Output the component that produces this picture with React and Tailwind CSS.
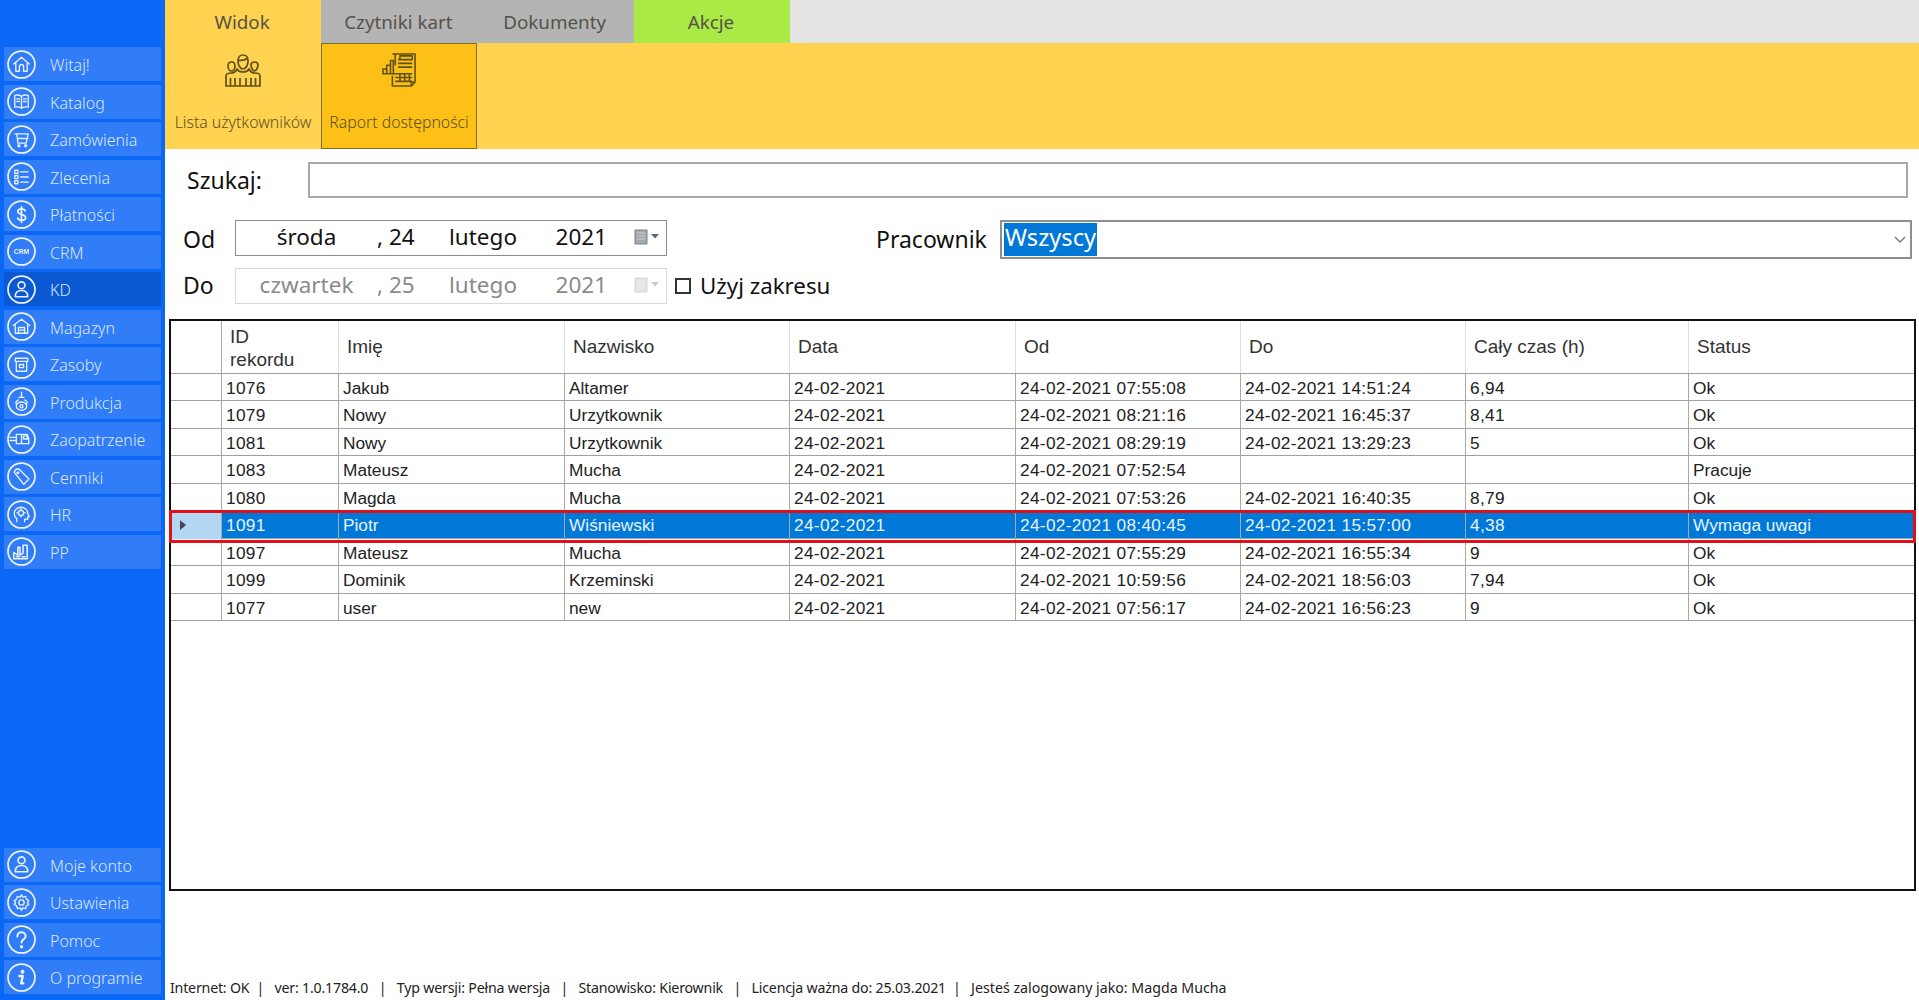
import React from "react";

const C = ({ children }) => (
  <svg viewBox="0 0 28 28" className="w-[29px] h-[29px] shrink-0" fill="none" stroke="#e8f1ff" strokeWidth="1.3" strokeLinejoin="round" strokeLinecap="round">
    <circle cx="14" cy="14" r="13" strokeWidth="1.7" />
    {children}
  </svg>
);

const icons = {
  home: <C><path d="M6.500 13.500 14 7l7.500 6.500M8.500 12v8.500h3.500v-4.500a2 2 0 0 1 4 0v4.500h3.500V12" /></C>,
  book: <C><path d="M14 9c-2-1.300-4.500-1.500-6.500-1v11.500c2-.5 4.500-.3 6.500 1 2-1.300 4.500-1.500 6.500-1V8c-2-.5-4.500-.3-6.500 1zM14 9v11.500M9.500 11.500h2.500M9.500 14h2.500M16 11.500h2.500M16 14h2.500" /></C>,
  cart: <C><path d="M7.500 8.500h2l1 9h8l2-9h-11M11 13h9" /><circle cx="11.500" cy="20" r="1" /><circle cx="18" cy="20" r="1" /></C>,
  list: <C><path d="M7.500 8h3v3h-3zM7.500 13h3v3h-3zM7.500 18h3v3h-3zM13 9.500h7.500M13 14.500h7.500M13 19.500h7.500" /></C>,
  dollar: <C><path d="M17.500 10.500c-.5-1.500-2-2-3.500-2-2 0-3.500 1-3.500 2.700 0 3.800 7.500 1.800 7.500 5.800 0 1.800-1.700 2.700-3.800 2.700-1.800 0-3.400-.7-3.900-2.300M14 6.500v15" strokeWidth="1.700" /></C>,
  crm: <C><text x="14" y="16.500" textAnchor="middle" fontSize="6.500" fontWeight="700" fill="#e8f1ff" stroke="none" fontFamily="Liberation Sans">CRM</text></C>,
  user: <C><circle cx="14" cy="10" r="3.300" strokeWidth="1.600" /><path d="M8 21c0-4.500 2-6 6-6s6 1.500 6 6z" strokeWidth="1.600" /></C>,
  warehouse: <C><path d="M6 13 14 7l8 6M8 12v8.500h12V12M11 20.500v-5.500h6v5.500M11 17.500h6" /></C>,
  box: <C><path d="M8 8h12v3H8zM9 11v9.500h10V11M12 14h4v3h-4z" /></C>,
  prod: <C><path d="M14 5v5M11.500 10h5M9 18.500a5 4 0 1 0 10 0a5 4 0 1 0-10 0M11 12.500c-2 1-3 2.500-2 4M17 12.500c2 1 3 2.500 2 4" /><circle cx="14" cy="18.500" r="1.500" /></C>,
  truck: <C><path d="M9 9h10.500l1.500 4v5H9zM14 9v9M3 12h6M3 15h6M9 18h12M16 10.500h3l1 3h-4z" /></C>,
  tag: <C><path d="M7 10 8.500 7l3-.2 9.700 9.700-5 5zM10.500 9.500a.8.8 0 1 0 .01 0" /></C>,
  head: <C><path d="M9.500 21v-3c-2-1.500-2.500-3.500-2.500-5 0-3.500 3-6 6.500-6s6.500 2.500 6.500 6l1.500 3h-1.500v2.500h-3V21" /><circle cx="13.500" cy="12.500" r="2.500" /><path d="M13.500 8.500v1.500M13.500 15v1.500M9.500 12.500h1.500M16 12.500h1.500" /></C>,
  plant: <C><path d="M6.500 21v-6l4 2.500V10h2v7.500l3-2V8h4v13z M9 19h3M14.500 19h3" strokeWidth="1.500" /></C>,
  gear: <C><circle cx="14" cy="14" r="2.600" /><path d="M14 6.500l1.300 2.300 2.700-.7.700 2.700 2.300 1.300-1.300 1.900 1.300 1.900-2.300 1.300-.7 2.700-2.700-.7L14 21.500l-1.300-2.300-2.700.7-.7-2.700-2.300-1.300 1.300-1.900-1.300-1.900 2.300-1.300.7-2.700 2.700.7z" /></C>,
  q: <C><path d="M10 11c0-2.500 2-4 4-4s4 1.500 4 3.800c0 3.200-4 3-4 6.200" strokeWidth="2" /><circle cx="14" cy="21" r="1" fill="#e8f1ff" /></C>,
  info: <C><path d="M12 12.500h3.200l-1.500 7h2" strokeWidth="2.400" /><circle cx="15" cy="8.500" r="1.300" fill="#e8f1ff" /></C>,
};

const Nav = ({ icon, label, active }) => (
  <div className={`h-[34px] flex items-center pl-[3px] ${active ? "bg-[#0a58d2]" : "bg-[#317cf7]"}`}>
    {icons[icon]}
    <span className="ml-[14px] pt-[2px] text-[16px] font-light text-[#dbe8ff] leading-none">{label}</span>
  </div>
);

const top = [
  ["home", "Witaj!"], ["book", "Katalog"], ["cart", "Zamówienia"], ["list", "Zlecenia"], ["dollar", "Płatności"],
  ["crm", "CRM"], ["user", "KD", true], ["warehouse", "Magazyn"], ["box", "Zasoby"], ["prod", "Produkcja"],
  ["truck", "Zaopatrzenie"], ["tag", "Cenniki"], ["head", "HR"], ["plant", "PP"],
];
const bottom = [["user", "Moje konto"], ["gear", "Ustawienia"], ["q", "Pomoc"], ["info", "O programie"]];

const rows = [
  ["1076", "Jakub", "Altamer", "24-02-2021", "24-02-2021 07:55:08", "24-02-2021 14:51:24", "6,94", "Ok"],
  ["1079", "Nowy", "Urzytkownik", "24-02-2021", "24-02-2021 08:21:16", "24-02-2021 16:45:37", "8,41", "Ok"],
  ["1081", "Nowy", "Urzytkownik", "24-02-2021", "24-02-2021 08:29:19", "24-02-2021 13:29:23", "5", "Ok"],
  ["1083", "Mateusz", "Mucha", "24-02-2021", "24-02-2021 07:52:54", "", "", "Pracuje"],
  ["1080", "Magda", "Mucha", "24-02-2021", "24-02-2021 07:53:26", "24-02-2021 16:40:35", "8,79", "Ok"],
  ["1091", "Piotr", "Wiśniewski", "24-02-2021", "24-02-2021 08:40:45", "24-02-2021 15:57:00", "4,38", "Wymaga uwagi"],
  ["1097", "Mateusz", "Mucha", "24-02-2021", "24-02-2021 07:55:29", "24-02-2021 16:55:34", "9", "Ok"],
  ["1099", "Dominik", "Krzeminski", "24-02-2021", "24-02-2021 10:59:56", "24-02-2021 18:56:03", "7,94", "Ok"],
  ["1077", "user", "new", "24-02-2021", "24-02-2021 07:56:17", "24-02-2021 16:56:23", "9", "Ok"],
];
const headers = ["Imię", "Nazwisko", "Data", "Od", "Do", "Cały czas (h)", "Status"];
const grid = "grid grid-cols-[51px_117px_226px_225px_226px_225px_225px_223px_1fr]";
const numeric = [0, 3, 4, 5, 6];

const Tab = ({ label, cls }) => (
  <div className={`w-[156.250px] flex items-center justify-center pt-[1px] pr-[2px] text-[18.800px] text-[#555248] ${cls}`}>{label}</div>
);

const Cal = ({ off }) => (
  <svg viewBox="0 0 28 18" className="w-[28px] h-[18px]">
    <path d="M1 2h12v14H1z" fill={off ? "#e4e4e4" : "#a4a9ae"} stroke={off ? "#d4d4d4" : "#7b8086"} />
    <path d="M3 5h8M3 8h8M3 11h8" stroke={off ? "#eeeeee" : "#c7cbcf"} />
    <path d="M17 6h8l-4 4.500z" fill={off ? "#c8c8c8" : "#5a6472"} />
  </svg>
);

const DateBox = ({ wd, d, y, off }) => (
  <div className={`w-[432px] h-[36px] border flex items-center pb-[2px] text-[22.500px] leading-none whitespace-nowrap ${off ? "border-[#d9d9d9] text-[#8a8a8a]" : "border-[#8c8c8c] text-[#111]"}`}>
    <span className="w-[141px] text-center">{wd}</span>
    <span className="w-[36px] text-right">{d}</span>
    <span className="w-[104px] text-right">lutego</span>
    <span className="w-[90px] text-right">{y}</span>
    <span className="ml-[27px] flex"><Cal off={off} /></span>
  </div>
);

export default function App() {
  return (
    <div className="w-[1919px] h-[1000px] flex bg-white overflow-hidden font-[Noto_Sans]">
      <aside className="w-[165px] shrink-0 bg-[#0b68f7] flex flex-col justify-between pl-[4px] pr-[4px] pt-[47px] pb-[6px]">
        <div className="flex flex-col gap-[3.500px]">
          {top.map(([i, l, a]) => <Nav key={l} icon={i} label={l} active={a} />)}
        </div>
        <div className="flex flex-col gap-[3.500px]">
          {bottom.map(([i, l]) => <Nav key={l} icon={i} label={l} />)}
        </div>
      </aside>
      <main className="flex-1 flex flex-col min-w-0">
        <div className="h-[43px] flex bg-[#e3e3e3] shrink-0">
          <Tab label="Widok" cls="bg-[#ffd24f]" />
          <Tab label="Czytniki kart" cls="bg-[#b4b4b4]" />
          <Tab label="Dokumenty" cls="bg-[#b4b4b4]" />
          <Tab label="Akcje" cls="bg-[#a9ea46]" />
        </div>
        <div className="h-[106px] bg-[#ffd24f] flex shrink-0 text-[15.800px] text-[#5c5020] font-light">
          <div className="w-[156px] flex flex-col items-center pt-[10px]">
            <svg viewBox="0 0 36 34" className="w-[36px] h-[34px]" fill="none" stroke="#5f501c" strokeWidth="1.700" strokeLinejoin="round">
              <path d="M13 8c0-4 2-6 5-6s5 2 5 6c0 4-2 8-5 8s-5-4-5-8zM13 7c3 1 7 0 10-2" />
              <path d="M3 13c0-2.500 1.500-4 3.500-4S10 10.500 10 13s-1.500 5-3.500 5S3 15.500 3 13zM26 12c0-2 1.500-3 3.500-3s3.500 1 3.500 3-1.500 6-3.500 6-3.500-4-3.500-6z" />
              <path d="M1 33V23c0-2 2-3 5.500-3 2 0 4-1 5.500-4 2 4 10 4 12 0 1.500 3 3.500 4 5.500 4 3.500 0 5.500 1 5.500 3v10zM5.500 25v8M10 25v8M15 25v8M21 25v8M26 25v8M30.500 25v8" />
            </svg>
            <span className="mt-[25px] leading-[20px] whitespace-nowrap">Lista użytkowników</span>
          </div>
          <div className="w-[156px] bg-[#fdc017] border border-[#7f6c2c] flex flex-col items-center pt-[9px]">
            <svg viewBox="0 0 36 36" className="w-[36px] h-[34px]" fill="none" stroke="#5f501c" strokeWidth="1.700" strokeLinejoin="round">
              <path d="M11 1h24v30l-4 4H11V24M35 31h-4v4M14 13V1M17 7h15M17 11h15M17 15h15M14 22h18M14 26h18M14 30h18M19 22v8M24 22v8M29 22v8M19 3h13v4H19z" />
              <path d="M1 22v-5h4v5zM5 22V13h4v9zM1 22h13M9 22V8h3v14z" />
            </svg>
            <span className="mt-[25px] leading-[20px] whitespace-nowrap">Raport dostępności</span>
          </div>
        </div>
        <div className="flex-1 flex flex-col pl-[4px] relative">
          <div className="h-[36px] mt-[13px] flex items-center shrink-0">
            <span className="w-[139px] pl-[18px] text-[23px] text-[#111]">Szukaj:</span>
            <div className="w-[1600px] h-full border-2 border-[#a8a8a8]" />
          </div>
          <div className="h-[39px] mt-[22px] flex items-start shrink-0">
            <span className="w-[66px] pl-[14px] self-center text-[23px] text-[#111]">Od</span>
            <DateBox wd="środa" d=", 24" y="2021" />
            <span className="ml-[209px] w-[124px] self-center text-[23px] text-[#111]">Pracownik</span>
            <div className="w-[912px] h-[39px] border-2 border-[#8f8f8f] flex items-center pl-[2px] pr-[4px] justify-between">
              <span className="bg-[#0078d7] text-white text-[23.700px] h-[33px] leading-[29px] px-[1px]">Wszyscy</span>
              <svg viewBox="0 0 12 8" className="w-[12px] h-[8px]" fill="none" stroke="#777" strokeWidth="1.400"><path d="M1 1l5 5 5-5" /></svg>
            </div>
          </div>
          <div className="h-[36px] mt-[9px] flex items-center shrink-0">
            <span className="w-[66px] pl-[14px] pb-[1px] text-[23px] text-[#111]">Do</span>
            <DateBox wd="czwartek" d=", 25" y="2021" off />
            <span className="ml-[8px] w-[16px] h-[16px] border-2 border-[#333]" />
            <span className="ml-[9px] pb-[1px] text-[22.300px] text-[#111]">Użyj zakresu</span>
          </div>
          <div className="w-[1747px] h-[572px] mt-[15px] border-2 border-[#111] shrink-0 text-[17.300px] text-[#222] relative font-[Arial]">
            <div className={`${grid} h-[53px] border-b border-[#a0a0a0] text-[19px] text-[#333]`}>
              <div className="border-r border-[#a8a8a8]" />
              <div className="border-r border-[#e0e0e0] pl-[8px] pt-[1px] flex items-center leading-[23px]">ID<br />rekordu</div>
              {headers.map((h) => (
                <div key={h} className="border-r border-[#e0e0e0] last:border-r-0 pl-[8px] pt-[1px] flex items-center">{h}</div>
              ))}
            </div>
            {rows.map((r) => {
              const sel = r[0] === "1091";
              return (
                <div key={r[0]} className={`${grid} h-[27.440px] border-b border-[#a0a0a0] items-stretch ${sel ? "bg-[#0078d7] text-[#e8f3ff]" : ""}`}>
                  <div className={`flex items-center pl-[9px] border-r border-[#a8a8a8] ${sel ? "bg-[#b3d7f3]" : ""}`}>
                    {sel && <svg viewBox="0 0 8 12" className="w-[7px] h-[11px]"><path d="M0 0l7 5.500L0 11z" fill="#404854" /></svg>}
                  </div>
                  {r.map((c, i) => (
                    <div key={i} className={`border-r border-[#a8a8a8] last:border-r-0 pl-[4px] pt-[2px] flex items-center whitespace-nowrap ${numeric.includes(i) ? "tracking-[0.3px]" : ""}`}>{c}</div>
                  ))}
                </div>
              );
            })}
            <div className="absolute left-[-2px] right-[-2px] top-[189px] h-[33px] border-[3px] border-[#e0101a] pointer-events-none" />
          </div>
          <div className="mt-auto mb-[2px] pl-[1px] text-[14.200px] text-[#222] whitespace-nowrap tracking-[-0.2px]">
            Internet: OK&nbsp; |&nbsp;&nbsp; ver: 1.0.1784.0&nbsp;&nbsp; |&nbsp;&nbsp; Typ wersji: Pełna wersja&nbsp;&nbsp; |&nbsp;&nbsp; Stanowisko: Kierownik&nbsp;&nbsp; |&nbsp;&nbsp; Licencja ważna do: 25.03.2021&nbsp; |&nbsp;&nbsp; <span className="tracking-[0px]">Jesteś zalogowany jako: Magda Mucha</span>
          </div>
        </div>
      </main>
    </div>
  );
}
